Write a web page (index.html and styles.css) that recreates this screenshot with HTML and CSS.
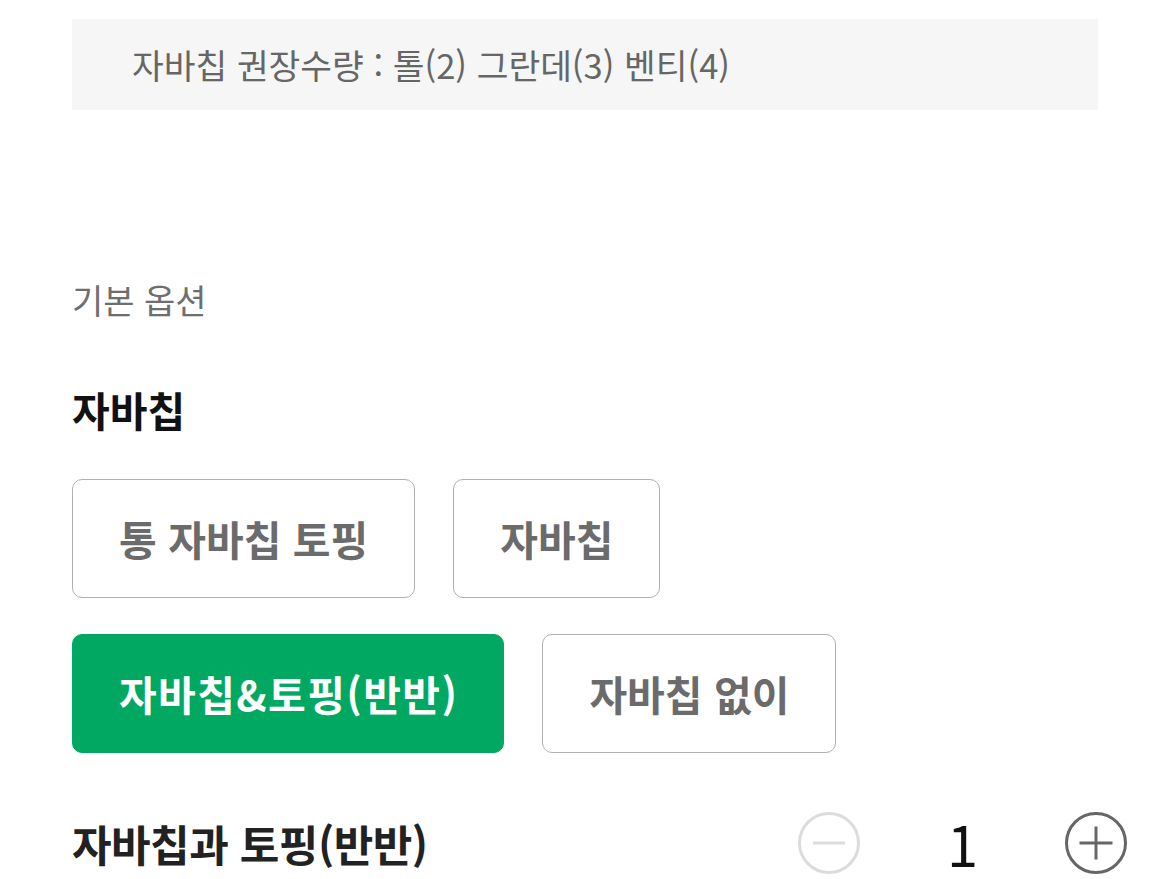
FILE: index.html
```html
<!DOCTYPE html>
<html lang="ko">
<head>
<meta charset="utf-8">
<link rel="stylesheet" href="styles.css">
</head>
<body>
<div class="page">
  <div class="notice">자바칩 권장수량 : 톨(2) 그란데(3) 벤티(4)</div>
  <div class="section-label">기본 옵션</div>
  <h2 class="option-title">자바칩</h2>
  <div class="choices">
    <div class="choice-row">
      <button class="choice">통 자바칩 토핑</button>
      <button class="choice">자바칩</button>
    </div>
    <div class="choice-row">
      <button class="choice selected">자바칩&amp;토핑(반반)</button>
      <button class="choice">자바칩 없이</button>
    </div>
  </div>
  <div class="qty-row">
    <div class="qty-label">자바칩과 토핑(반반)</div>
    <div class="stepper">
      <span class="step-btn minus">
        <svg width="64" height="64" viewBox="0 0 64 64"><circle cx="32" cy="32" r="29.5" fill="none" stroke="#dcdcdc" stroke-width="3"/><line x1="16" y1="32" x2="48" y2="32" stroke="#dcdcdc" stroke-width="3"/></svg>
      </span>
      <span class="qty-num">1</span>
      <span class="step-btn plus">
        <svg width="64" height="64" viewBox="0 0 64 64"><circle cx="32" cy="32" r="29.5" fill="none" stroke="#666" stroke-width="3"/><line x1="15.5" y1="32" x2="48.5" y2="32" stroke="#666" stroke-width="3"/><line x1="32" y1="15.5" x2="32" y2="48.5" stroke="#666" stroke-width="3"/></svg>
      </span>
    </div>
  </div>
</div>
</body>
</html>
```
FILE: styles.css
```css
html, body {
  margin: 0;
  padding: 0;
  background: #fff;
}
body {
  font-family: "Noto Sans CJK KR", "Noto Sans", sans-serif;
  color: #111;
}
.page {
  padding: 19px 72px 0 72px;
  width: 1026px;
}
.notice {
  height: 91px;
  background: #f6f6f6;
  display: flex;
  align-items: center;
  padding-left: 60px;
  font-size: 34.5px;
  line-height: 1;
  color: #666;
}
.section-label {
  margin-top: 168px;
  font-size: 34px;
  line-height: 44px;
  color: #6e6e6e;
}
.option-title {
  margin: 62px 0 0 0;
  font-size: 41px;
  line-height: 50px;
  font-weight: 700;
  color: #111;
}
.choices {
  margin-top: 45px;
  display: flex;
  flex-direction: column;
  row-gap: 36px;
}
.choice-row {
  display: flex;
  column-gap: 38px;
}
.choice {
  height: 119px;
  padding: 0 46px;
  border: 1.5px solid #b0b0b0;
  border-radius: 10px;
  background: #fff;
  font-family: "Noto Sans CJK KR", "Noto Sans", sans-serif;
  font-size: 41px;
  font-weight: 700;
  color: #6b6b6b;
  line-height: 1;
}
.choice.selected {
  background: #00a862;
  border-color: #00a862;
  color: #fff;
  letter-spacing: 1.4px;
  padding: 0 45px 0 46px;
}
.qty-row {
  margin-top: 58px;
  display: flex;
  align-items: center;
  justify-content: space-between;
  margin-right: -30px;
}
.qty-label {
  font-size: 43px;
  font-weight: 700;
  line-height: 50px;
  color: #222;
  letter-spacing: -0.5px;
}
.stepper {
  display: flex;
  align-items: center;
  height: 64px;
}
.step-btn {
  display: flex;
  width: 64px;
  height: 64px;
}
.qty-num {
  width: 203px;
  text-align: center;
  font-size: 56px;
  line-height: 58px;
  color: #111;
}
```
